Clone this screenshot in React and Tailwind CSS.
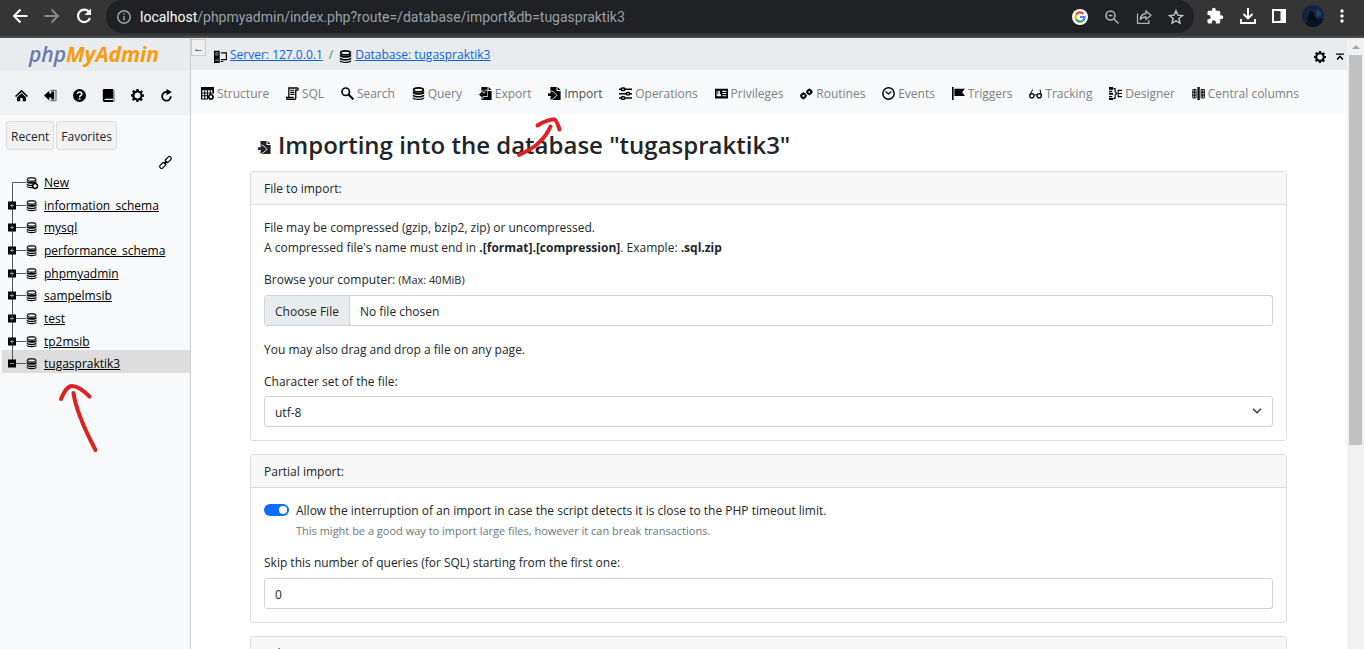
import React from "react";

/* ---------- small icons, 16 x 16 grid ---------- */
function Ico({ className = "size-[13px]", children }) {
  return (
    <svg viewBox="0 0 16 16" className={className + " shrink-0"} fill="currentColor" aria-hidden="true">
      {children}
    </svg>
  );
}

const GEAR =
  "M6.6 0h2.8l.4 2.1 1.6.7L13.2 1.600 14.800 3.200 13.400 5l.6 1.500 2 .300v2.600l-2 .400-.700 1.500 1.300 1.800-1.900 1.800-1.800-1.200-1.500.600L9.300 16H6.600l-.400-2.100-1.500-.600-1.800 1.200L1.200 12.800l1.200-1.800-.700-1.500L0 9.200V6.600l1.900-.400.700-1.500L1.400 3 3.200 1.300 5 2.600l1.300-.6zM8 4.400a3.600 3.600 0 1 0 0 7.200 3.600 3.600 0 0 0 0-7.200z";

const icons = {
  home: (
    <>
      <path d="M8 1 0 8.500l1.300 1.400L8 3.700l6.700 6.200L16 8.500z" />
      <path d="M8 5.300 2.500 10.300V15h4v-4h3v4h4v-4.700z" />
    </>
  ),
  exit: (
    <>
      <path d="M8 1h7.500v14H8v-1.500h6V2.500H8z" fill="#777" />
      <path d="M0 8l6.500-6V5.500H9V3h3.500v10H9v-2.500H6.500V14z" />
    </>
  ),
  help: (
    <>
      <circle cx="8" cy="8" r="8" />
      <path d="M5.300 6.200C5.300 2.800 11 3 10.800 6.300 10.700 8 8.200 8 8.200 10" fill="none" stroke="#fff" strokeWidth="1.900" />
      <path d="M7.200 11.300h2v1.900h-2z" fill="#fff" />
    </>
  ),
  book: (
    <>
      <path d="M3 0h11v12H3.800c-1.200 0-1.200 1.500 0 1.500H14V16H3.500C2 16 1 15 1 13.500V2c0-1.200.8-2 2-2z" />
      <path d="M14.800 2v14" stroke="#777" strokeWidth="1.400" />
    </>
  ),
  gear: <path fillRule="evenodd" d={GEAR} />,
  reload: (
    <>
      <path d="M9.500 3.800A5.400 5.400 0 1 0 13.400 9" fill="none" stroke="currentColor" strokeWidth="2.200" />
      <path d="M8 0l6.500 3.800L8 7.800z" />
    </>
  ),
  link: (
    <g fill="none" stroke="currentColor" strokeWidth="1.400">
      <rect x="7.200" y="2" width="8.400" height="4.600" rx="2.300" transform="rotate(-45 11.400 4.300)" />
      <rect x="0.400" y="9.300" width="8.400" height="4.600" rx="2.300" transform="rotate(-45 4.600 11.600)" />
      <path d="M6 10l4-4" />
    </g>
  ),
  server: (
    <>
      <path fillRule="evenodd" d="M0 1h7v15H0zM1.500 3v1h4V3zM1.500 5.500v1h4v-1zM1.500 12v1h4v-1z" />
      <path d="M8.500 3.500h6.700v8.300H8.500M8 14.200h3.500" fill="none" stroke="currentColor" strokeWidth="1.400" />
    </>
  ),
  db: (
    <>
      <ellipse cx="8" cy="3.500" rx="6" ry="2.500" fill="none" stroke="currentColor" strokeWidth="2" />
      <path d="M1 5c1.500 3 12.500 3 14 0v2.400c0 3-14 3-14 0zM1 8.800c1.500 3 12.500 3 14 0v2c0 3-14 3-14 0zM1 12.200c1.500 3 12.500 3 14 0v1.300c0 3.200-14 3.200-14 0z" />
    </>
  ),
  structure: (
    <>
      <path fillRule="evenodd" d="M0 0h16v8h-2V4H1.500v10H8v1.500H0z" />
      <path d="M1 7.500h13M1 10.800h8M4.600 4v11M8 4v11M11.400 4v4" fill="none" stroke="currentColor" strokeWidth="1.200" />
      <circle cx="12.200" cy="12.200" r="2.600" fill="none" stroke="currentColor" strokeWidth="1.900" />
      <path d="M12.200 8v8.400M8 12.200h8.400" stroke="currentColor" strokeWidth="1" strokeDasharray="1.500 5.400" />
    </>
  ),
  sql: (
    <>
      <path d="M3.500 13V1.200h10.300c1.400 0 1.400 2.800 0 2.800H12v9.500c0 1.600-1.500 1.600-1.500 1.600H2c-1.800 0-1.500-2.300-1.500-2.300h9" fill="none" stroke="currentColor" strokeWidth="1.600" />
      <path d="M5.300 4h5M5.300 6.500h5M5.300 9h5" stroke="currentColor" strokeWidth="1.500" />
    </>
  ),
  search: (
    <>
      <circle cx="5.800" cy="5.800" r="4.600" fill="none" stroke="currentColor" strokeWidth="2" />
      <path d="M9.300 9.300l6 6" stroke="currentColor" strokeWidth="2.600" />
    </>
  ),
  exportI: (
    <>
      <path d="M3 0h7.500v5H15.500v11H3z" />
      <path d="M11.800 0v3.800h3.700z" />
      <path
        d="M0 9.200L4.500 5v2.600h3.200V4.200h2.600v7H4.500v2.600z"
        stroke="#f8f9fa"
        strokeWidth="1.400"
        paintOrder="stroke"
      />
    </>
  ),
  importI: (
    <>
      <path d="M3 0h7.500v5H15.500v11H3z" />
      <path d="M11.800 0v3.800h3.700z" />
      <path
        d="M0 7.800h3.800L2.500 5.500h3.200L10.500 10l-4.800 4.500H2.500L3.800 11H0z"
        stroke="#f8f9fa"
        strokeWidth="1.600"
        paintOrder="stroke"
      />
    </>
  ),
  operations: (
    <g fill="none" stroke="currentColor" strokeWidth="1.800">
      <path d="M0 2.800h3M7.500 2.800H16M0 8.200h8.500M13 8.200h3M0 13.600h3M7.500 13.600H16" />
      <rect x="3" y="1.300" width="4" height="3" rx="1" />
      <rect x="9" y="6.700" width="4" height="3" rx="1" />
      <rect x="3" y="12.100" width="4" height="3" rx="1" />
    </g>
  ),
  privileges: (
    <path fillRule="evenodd" d="M0 2h16v12H0zM2 4.500v7h5.500v-2L6 8.500V4.500H4v4l-1 1V4.500zM9 4.500V6h5V4.500zM9 7.300v1.400h5V7.300zM9 10v1.500h5V10z" />
  ),
  routines: (
    <g fill="none" stroke="currentColor">
      <circle cx="4.200" cy="10.800" r="2.600" strokeWidth="2.400" />
      <circle cx="11.500" cy="6" r="2.400" strokeWidth="2.400" />
      <path d="M4.200 6.300v9.200M-.3 10.800h9M11.500 1.800v8.400M7.300 6h8.400" strokeWidth="1.400" strokeDasharray="1.500 6" />
    </g>
  ),
  events: (
    <g fill="none" stroke="currentColor" strokeWidth="1.800">
      <circle cx="8" cy="8" r="7" />
      <path d="M4.300 5.500L8 8.500l3.500-3" strokeWidth="1.500" />
    </g>
  ),
  triggers: <path d="M0 0h2v16H0zM3 2h13l-3.500 4.500L16 11H3z" />,
  tracking: (
    <g fill="none" stroke="currentColor" strokeWidth="1.500">
      <circle cx="3.500" cy="10.800" r="2.700" />
      <circle cx="12.500" cy="10.800" r="2.700" />
      <path d="M6 10.500c1-1.200 3-1.200 4 0M.8 10.500L4.500 3M15.200 10.500L13.500 3" strokeWidth="1.200" />
    </g>
  ),
  designer: (
    <>
      <path d="M0 0h5v3.500H0zM0 4.500h4v2H0zM0 7.500h5v2H0zM0 11h4v1.500H0zM0 13.500h5V16H0z" />
      <path d="M5.500 2h2v3.500L9.500 8l-2 2v4h-2M11.300 3.500v9M11 4.200h5M11 8h5M11 11.800h5" fill="none" stroke="currentColor" strokeWidth="1.400" />
    </>
  ),
  central: (
    <>
      <path d="M6.700 0h2.800v16H6.700z" />
      <path d="M1 3h4v10.500H1zM11.200 3h4v10.500h-4zM0 6.500h5M0 10h5M11.200 6.500H16M11.200 10H16M3 3v10M13.200 3v10" fill="none" stroke="currentColor" strokeWidth="1.100" />
    </>
  ),
  top: <path d="M0 1h16v2.500H0zM8 4.500l7 7.500-2.200 2L8 9l-4.800 5L1 12z" />,
};

const tabs = [
  ["Structure", "structure"],
  ["SQL", "sql"],
  ["Search", "search"],
  ["Query", "db"],
  ["Export", "exportI"],
  ["Import", "importI"],
  ["Operations", "operations"],
  ["Privileges", "privileges"],
  ["Routines", "routines"],
  ["Events", "events"],
  ["Triggers", "triggers"],
  ["Tracking", "tracking"],
  ["Designer", "designer"],
  ["Central columns", "central"],
];

const databases = [
  "New",
  "information_schema",
  "mysql",
  "performance_schema",
  "phpmyadmin",
  "sampelmsib",
  "test",
  "tp2msib",
  "tugaspraktik3",
];

function BrowserBar() {
  return (
    <header className="flex h-[38px] shrink-0 items-start border-b-2 border-[#4a4a4a] bg-[#353535] font-['Roboto',sans-serif] text-white">
      <div className="flex h-8 w-[106px] shrink-0 items-center gap-[18px] pl-[13px]">
        <button aria-label="Back">
          <svg viewBox="0 0 14 14" className="size-[14px] overflow-visible" fill="none" stroke="#fff" strokeWidth="2">
            <path d="M14.500 7H1.500M7.500.5L1 7l6.500 6.500" />
          </svg>
        </button>
        <button aria-label="Forward">
          <svg viewBox="0 0 14 14" className="size-[14px] overflow-visible" fill="none" stroke="#8a8a8a" strokeWidth="2">
            <path d="M-.5 7h13M6.500.5L13 7l-6.500 6.500" />
          </svg>
        </button>
        <button aria-label="Reload">
          <svg viewBox="0 0 14 14" className="size-[14px] overflow-visible" fill="none" stroke="#fff" strokeWidth="2.200">
            <path d="M12.200 3.200A6.200 6.200 0 1 0 13 9" />
            <path d="M14 -.5V6H7.500z" fill="#fff" stroke="none" />
          </svg>
        </button>
      </div>
      <div className="flex h-[33px] min-w-0 flex-1 items-center rounded-2xl bg-[#202124] pl-[11px] pr-[10px]">
        <svg viewBox="0 0 14 14" className="size-[14px] shrink-0" fill="none" stroke="#9aa0a6" strokeWidth="1.500">
          <circle cx="7" cy="7" r="6.200" />
          <path d="M7 6v4.500M7 3.300v1.500" />
        </svg>
        <span className="ml-[9px] flex-1 truncate text-sm leading-8 text-[#9aa0a6]">
          <span className="text-white">localhost</span>/phpmyadmin/index.php?route=/database/import&amp;db=tugaspraktik3
        </span>
        <div className="flex items-center gap-4">
          <svg viewBox="0 0 16 16" className="size-4">
            <circle cx="8" cy="8" r="8" fill="#fff" />
            <g fill="none" strokeWidth="2.200">
              <path d="M4 5.700A4.600 4.600 0 0 1 11.300 4.800" stroke="#ea4335" />
              <path d="M4 5.700a4.600 4.600 0 0 0 0 4.600" stroke="#fbbc05" />
              <path d="M4 10.300a4.600 4.600 0 0 0 6.800 1.400" stroke="#34a853" />
              <path d="M10.800 11.700A4.600 4.600 0 0 0 12.600 8H8" stroke="#4285f4" />
            </g>
          </svg>
          <svg viewBox="0 0 16 16" className="size-4" fill="none" stroke="#b0b4b8" strokeWidth="1.500">
            <circle cx="6.500" cy="6.500" r="4.500" />
            <path d="M10 10l4.500 4.500M4.500 6.500h4" />
          </svg>
          <svg viewBox="0 0 16 16" className="size-4" fill="none" stroke="#b0b4b8" strokeWidth="1.300">
            <path d="M1.500 4.500v9.800h11.300v-3.300" />
            <path d="M10 2l5 4.200-5 4.200V8c-3 0-4.800 1-5.800 2.800C4.500 7 6.500 4.800 10 4.500z" />
          </svg>
          <svg viewBox="0 0 16 16" className="size-4" fill="none" stroke="#c4c7ca" strokeWidth="1.400">
            <path d="M8 1.800l1.800 4.300 4.700.4-3.600 3 1.100 4.600L8 11.700l-4 2.400 1.100-4.600-3.600-3 4.700-.4z" />
          </svg>
        </div>
      </div>
      <div className="flex h-8 shrink-0 items-center gap-4 pl-3 pr-5">
        <svg viewBox="0 0 24 24" className="size-[18px]" fill="#fff">
          <path d="M20.500 11H19V7c0-1.100-.9-2-2-2h-4V3.500a2.500 2.500 0 0 0-5 0V5H4c-1.100 0-2 .9-2 2v3.800h1.500a2.700 2.700 0 0 1 0 5.400H2V20c0 1.100.9 2 2 2h3.800v-1.500a2.700 2.700 0 0 1 5.400 0V22H17c1.100 0 2-.9 2-2v-4h1.500a2.500 2.500 0 0 0 0-5z" />
        </svg>
        <svg viewBox="0 0 16 16" className="size-4" fill="none" stroke="#fff" strokeWidth="1.900">
          <path d="M8 0v10M3.500 6L8 10.500 12.500 6M1 11v4h14v-4" />
        </svg>
        <svg viewBox="0 0 14 14" className="size-[14px]">
          <path d="M0 0h14v14H0zM2 2v10h6.500V2z" fill="#fff" fillRule="evenodd" />
        </svg>
        <svg viewBox="0 0 22 22" className="size-[22px]">
          <circle cx="11" cy="11" r="11" fill="#122544" />
          <path d="M11 22a11 11 0 0 0 10.500-8C17 12 14 15 9 14L3 18.500A11 11 0 0 0 11 22z" fill="#0a1322" />
          <path d="M5 15c0-3 1-4 2-5 0-5 5-5 5 0 2 1 2 3 2 6z" fill="#060b14" />
          <path d="M14 5c3 0 5 2 6 5l-5 2z" fill="#23406b" />
        </svg>
        <svg viewBox="0 0 4 14" className="h-[14px] w-1" fill="#fff">
          <circle cx="2" cy="2" r="1.700" />
          <circle cx="2" cy="7" r="1.700" />
          <circle cx="2" cy="12" r="1.700" />
        </svg>
      </div>
    </header>
  );
}

function TreeRow({ name, index, last }) {
  const first = index === 0;
  return (
    <li className={"flex min-h-0 flex-1 items-start pl-1 " + (last ? "bg-[#ddd]" : "")}>
      <svg viewBox="0 0 34 22" className="h-[22px] w-[34px] shrink-0 overflow-visible" aria-hidden="true">
        <path
          d={first ? "M6.500 24V13.500H20" : last ? "M6.500 0V13.500M6 13.500H20" : "M6.500 0V24M6 13.500H20"}
          fill="none"
          stroke="#555"
          strokeWidth="1"
        />
        {!first && (
          <>
            <path d="M2 9.500h8v8H2z" fill="#000" />
            <path d={last ? "M4 13.500h4" : "M4 13.500h4M6 11.500v4"} stroke="#999" strokeWidth="1" />
          </>
        )}
        <g transform="translate(20 8) scale(.7)">
          {icons.db}
          {first && <circle cx="13" cy="13" r="3.500" fill="#f8f9fa" stroke="#000" strokeWidth="2" />}
        </g>
      </svg>
      <a href="#" className="ml-1 mt-[6px] leading-4 text-black underline">
        {name}
      </a>
    </li>
  );
}

function Sidebar() {
  return (
    <aside className="relative flex w-[191px] shrink-0 flex-col border-r border-[#ccc] bg-[#f8f9fa]">
      <a href="#" className="flex h-[33px] items-center justify-center bg-[#e9ecef] pb-[2px] pr-[2px] font-['Open_Sans',sans-serif] text-[21px] font-semibold italic leading-6 text-[#6c78af]">
        php<span className="font-bold text-[#f89c0e]">MyAdmin</span>
      </a>
      <nav className="flex h-11 items-center gap-4 bg-[#f0f1f3] pl-[15px] pt-1">
        {["home", "exit", "help", "book", "gear", "reload"].map((n) => (
          <a key={n} href="#" aria-label={n} className="text-black">
            <Ico>{icons[n]}</Ico>
          </a>
        ))}
      </nav>
      <div className="flex gap-[2px] pl-[6px] pt-[6px]">
        <button className="h-[29px] rounded-[3px] border border-[#ddd] bg-[#f2f2f2] px-1 pt-[2px]">Recent</button>
        <button className="h-[29px] rounded-[3px] border border-[#ddd] bg-[#f2f2f2] px-1 pt-[2px]">Favorites</button>
      </div>
      <div className="flex h-[19px] items-end justify-end pr-[18px]">
        <a href="#" aria-label="Unlink from main panel" className="text-black">
          <Ico>{icons.link}</Ico>
        </a>
      </div>
      <ul className="ml-[2px] flex h-[204px] flex-col">
        {databases.map((d, i) => (
          <TreeRow key={d} name={d} index={i} last={i === databases.length - 1} />
        ))}
      </ul>
      <svg viewBox="0 0 40 72" className="absolute left-[57px] top-[344px] h-[72px] w-10" fill="none" stroke="#dd2222" strokeWidth="4" strokeLinecap="round" strokeLinejoin="round" aria-hidden="true">
        <path d="M38.500 68C29 50 19 29 16.500 11M4 17C7 10 10 4 15 4c6 0 11 4 17.500 10.500" />
      </svg>
    </aside>
  );
}

function Card({ title, children }) {
  return (
    <fieldset className="mb-[13px] rounded-[3px] border border-[#dcdcdc] bg-white">
      <div className="border-b border-[#dcdcdc] bg-[#f7f7f7] px-[13px] pb-[5px] pt-[7px] leading-5">{title}</div>
      <div className="p-[13px] leading-5">{children}</div>
    </fieldset>
  );
}

const field = "block h-[31px] w-full rounded-[3px] border border-[#ced4da] bg-white text-[#212529]";

function ImportForm() {
  return (
    <form className="pl-[59px] pr-[60px]">
      <h2 className="flex h-[56px] items-center gap-[7px] pl-2 pt-1 text-2xl font-semibold">
        <span className="pt-1">
          <Ico>{icons.importI}</Ico>
        </span>
        Importing into the database "tugaspraktik3"
      </h2>
      <Card title="File to import:">
        <p>
          File may be compressed (gzip, bzip2, zip) or uncompressed.
          <br />A compressed file's name must end in <b>.[format].[compression]</b>. Example: <b>.sql.zip</b>
        </p>
        <label htmlFor="file" className="mb-[5px] mt-3 block">
          Browse your computer: <small className="text-[11px]">(Max: 40MiB)</small>
        </label>
        <input
          id="file"
          type="file"
          className={
            field +
            " overflow-hidden file:mr-[10px] file:h-[29px] file:border-r file:border-[#ced4da] file:bg-[#e9ecef] file:px-[10px] file:pt-[2px] file:text-[#212529]"
          }
        />
        <p className="mt-[14px]">You may also drag and drop a file on any page.</p>
        <label htmlFor="charset" className="mb-1 mt-3 block">
          Character set of the file:
        </label>
        <div className="relative">
          <select id="charset" className={field + " appearance-none px-[10px] pt-[2px]"}>
            <option>utf-8</option>
          </select>
          <svg viewBox="0 0 10 6" className="pointer-events-none absolute right-[11px] top-3 h-[6px] w-[10px]" fill="none" stroke="#343a40" strokeWidth="1.500">
            <path d="M1 .8l4 4 4-4" />
          </svg>
        </div>
      </Card>
      <Card title="Partial import:">
        <div className="flex items-start gap-[7px]">
          <input
            id="interrupt"
            type="checkbox"
            defaultChecked
            className="mt-[3px] flex h-3 w-[25px] shrink-0 appearance-none items-center justify-start rounded-full bg-[#adb5bd] px-[2px] before:size-2 before:rounded-full before:bg-white checked:justify-end checked:bg-[#0d6efd]"
          />
          <div>
            <label htmlFor="interrupt" className="block">
              Allow the interruption of an import in case the script detects it is close to the PHP timeout limit.
            </label>
            <p className="text-[11px] leading-5 text-[#6c757d]">
              This might be a good way to import large files, however it can break transactions.
            </p>
          </div>
        </div>
        <label htmlFor="skip" className="mb-[5px] mt-3 block">
          Skip this number of queries (for SQL) starting from the first one:
        </label>
        <input id="skip" type="text" defaultValue="0" className={field + " px-[10px] pt-[2px]"} />
      </Card>
      <Card title="Other options">
        <label htmlFor="fk" className="flex gap-[7px]">
          <input id="fk" type="checkbox" /> Enable foreign key checks
        </label>
      </Card>
    </form>
  );
}

export default function App() {
  return (
    <div className="flex h-screen flex-col overflow-hidden bg-white font-['Open_Sans',sans-serif] text-[12px] text-[#212529]">
      <BrowserBar />
      <div className="flex min-h-0 flex-1">
        <Sidebar />
        <main className="relative min-w-0 flex-1 overflow-hidden">
          <div className="flex h-8 items-center bg-[#e9ecef]">
            <button aria-label="Hide navigation panel" className="mt-px h-[17px] w-[15px] self-start border border-[#ccc] bg-[#eee] text-[11px] leading-[14px]">
              ←
            </button>
            <nav className="ml-2 flex flex-1 items-center gap-[3px] pt-[2px] text-[#0b63e0]">
              <span className="pt-[2px]">
                <Ico className="size-[13px] text-black">{icons.server}</Ico>
              </span>
              <a href="#" className="underline">
                Server: 127.0.0.1
              </a>
              <span className="px-[3px] text-[#6c757d]">/</span>
              <span className="pt-[2px]">
                <Ico className="size-[13px] text-black">{icons.db}</Ico>
              </span>
              <a href="#" className="underline">
                Database: tugaspraktik3
              </a>
            </nav>
            <div className="flex items-center gap-[10px] pr-[3px] pt-[5px] text-black">
              <button aria-label="Page-related settings">
                <Ico className="size-3">{icons.gear}</Ico>
              </button>
              <button aria-label="Scroll to top">
                <Ico className="size-2">{icons.top}</Ico>
              </button>
            </div>
          </div>
          <nav className="flex h-[45px] items-center justify-between bg-[#f8f9fa] pl-[10px] pr-[48px] pt-[2px]">
            {tabs.map(([label, ico]) => (
              <a
                key={label}
                href="#"
                className={"flex shrink-0 items-center gap-[3px] whitespace-nowrap " + (label === "Import" ? "text-[#495057]" : "text-[#7b7f83]")}
              >
                <Ico className="size-[13px] text-black">{icons[ico]}</Ico>
                {label}
              </a>
            ))}
          </nav>
          <ImportForm />
          <svg viewBox="0 0 48 44" className="absolute left-[324px] top-[78px] h-11 w-12" fill="none" stroke="#dd2222" strokeWidth="4" strokeLinecap="round" strokeLinejoin="round" aria-hidden="true">
            <path d="M4 39C13 35 20 31 25 25.500 30 21 33 16 35.500 10.500M22.500 9.500C29 5 37 3 39.500 3.500 41.500 4 43 9 44.500 13.500" />
          </svg>
        </main>
        <div className="flex w-[17px] shrink-0 flex-col items-center bg-[#f1f1f1]" aria-hidden="true">
          <svg viewBox="0 0 8 17" className="h-[17px] w-2 shrink-0" fill="#a3a3a3">
            <path d="M0 11l4-4 4 4z" />
          </svg>
          <div className="h-[390px] w-[13px] bg-[#c1c1c1]" />
        </div>
      </div>
    </div>
  );
}
